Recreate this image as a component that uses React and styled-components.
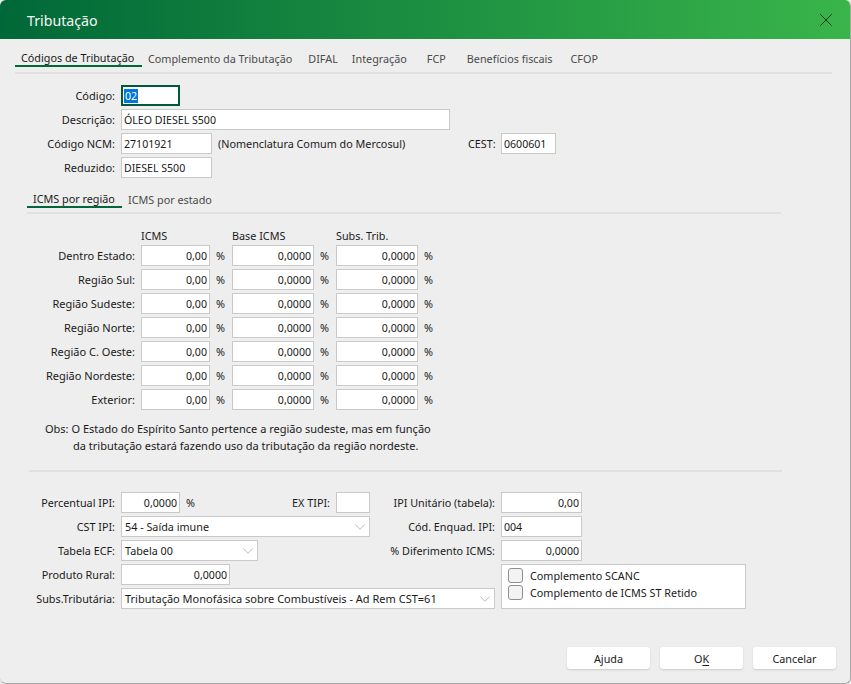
import React from "react";
import styled, { createGlobalStyle } from "styled-components";
import { ChevronDown, X } from "lucide-react";

const GlobalStyle = createGlobalStyle`
  html, body {
    margin: 0;
    padding: 0;
    background: #eeeeee;
  }
  * {
    box-sizing: border-box;
  }
`;

const Window = styled.div`
  width: 851px;
  height: 684px;
  display: flex;
  flex-direction: column;
  background: #eeeeee;
  border-right: 1px solid #a8a8a8;
  border-bottom: 1px solid #a8a8a8;
  border-radius: 6px;
  overflow: hidden;
  font-family: "Noto Sans", sans-serif;
  font-size: 10.8px;
  color: #1a1a1a;
`;

const TitleBar = styled.header`
  height: 39px;
  flex: none;
  display: flex;
  align-items: center;
  justify-content: space-between;
  padding: 1px 13px 0 27px;
  background: linear-gradient(90deg, #006838 0%, #39b54a 100%);
  color: #f4f8f4;
  font-size: 14.2px;
`;

const Tabs = styled.nav`
  display: flex;
  align-items: flex-end;
  height: ${(p) => p.$height}px;
  margin: ${(p) => p.$margin};
  border-bottom: 2px solid #e0e0e0;
  padding-bottom: ${(p) => p.$pb}px;
`;

const Tab = styled.div`
  height: ${(p) => (p.$active ? 19 : 18)}px;
  margin-left: ${(p) => p.$ml || 0}px;
  padding: 2px 6px 0;
  width: ${(p) => p.$w}px;
  white-space: nowrap;
  color: ${(p) => (p.$active ? "#1a1a1a" : "#4a4a4a")};
  border-bottom: 2px solid ${(p) => (p.$active ? "#006838" : "transparent")};
  margin-bottom: -1px;
`;

const TopForm = styled.section`
  display: flex;
  flex-direction: column;
  gap: 3px;
  margin: 11px 0 0 15px;
`;

const Row = styled.div`
  display: flex;
  align-items: center;
  height: 21px;
`;

const Label = styled.label`
  flex: none;
  width: 100px;
  margin-right: 6px;
  text-align: right;
  white-space: nowrap;
  font-size: 11px;
`;

const Field = styled.div`
  flex: none;
  width: ${(p) => (p.$w ? `${p.$w}px` : "100%")};
  height: 21px;
  display: flex;
  align-items: center;
  justify-content: ${(p) => (p.$right ? "flex-end" : "flex-start")};
  padding: 0 2px;
  background: #ffffff;
  border: 1px solid #c9c9c9;
  font-size: 10.6px;
  white-space: nowrap;
  overflow: hidden;
`;

const FocusField = styled(Field)`
  border: 2px solid #00593a;
  padding-left: 1px;
`;

const Selected = styled.span`
  background: #0078d7;
  color: #ffffff;
  padding: 0 1px;
`;

const Note = styled.span`
  width: 250px;
  margin-left: 6px;
  white-space: nowrap;
`;

const CestLabel = styled.label`
  width: 27px;
  margin-right: 6px;
  white-space: nowrap;
`;

const RatesGrid = styled.section`
  display: grid;
  grid-template-columns: 121px 69px 22px 82px 22px 82px 22px;
  grid-auto-rows: 21px;
  row-gap: 3px;
  align-items: center;
  margin: 7px 0 0 20px;
`;

const RateHead = styled.div`
  height: 14px;
  align-self: end;
  grid-column: ${(p) => p.$col};
  white-space: nowrap;
`;

const RateLabel = styled.label`
  padding-right: 6px;
  text-align: right;
  white-space: nowrap;
  font-size: 11px;
`;

const Percent = styled.span`
  padding-left: 6px;
`;

const Obs = styled.p`
  margin: 10px 0 0 45px;
  line-height: 17px;
  font-size: 11px;
  white-space: nowrap;
`;

const ObsIndent = styled.span`
  display: block;
  padding-left: 28px;
`;

const Rule = styled.hr`
  height: 2px;
  width: 753px;
  margin: 16px 0 0 29px;
  border: 0;
  background: #e0e0e0;
`;

const BottomGrid = styled.section`
  display: grid;
  grid-template-columns: 100px 249px 119px 81px 158px;
  grid-auto-rows: 21px;
  gap: 3px 6px;
  align-items: center;
  margin: 20px 0 0 15px;
`;

const CellLabel = styled.label`
  text-align: right;
  white-space: nowrap;
`;

const Inline = styled.div`
  display: flex;
  align-items: center;
  height: 21px;
`;

const ExLabel = styled.label`
  margin-left: auto;
  margin-right: 6px;
`;

const Select = styled(Field)`
  justify-content: space-between;
  padding: 0 0 0 3px;
  font-size: ${(p) => (p.$wide ? 11 : 10.8)}px;
  width: ${(p) => (p.$w ? `${p.$w}px` : "100%")};
  grid-column: ${(p) => p.$span || "auto"};
  svg {
    color: #999999;
    flex: none;
  }
`;

const CheckBox = styled.div`
  grid-column: 4 / 6;
  grid-row: 4 / 6;
  height: 45px;
  align-self: start;
  width: 245px;
  padding: 2px 6px;
  background: #ffffff;
  border: 1px solid #c9c9c9;
`;

const CheckRow = styled.div`
  display: flex;
  align-items: center;
  gap: 7px;
  height: 17px;
`;

const Check = styled.span`
  width: 15px;
  height: 15px;
  background: #f3f3f3;
  border: 1px solid #8e8e8e;
  border-radius: 3px;
`;

const Footer = styled.footer`
  display: flex;
  justify-content: flex-end;
  gap: 10px;
  margin-top: auto;
  padding: 0 14px 14px 0;
`;

const Button = styled.button`
  width: 83px;
  height: 22px;
  padding: 0;
  background: #ffffff;
  border: 0;
  border-radius: 3px;
  box-shadow: 0 1px 2px rgba(0, 0, 0, 0.15);
  font: inherit;
  color: #1a1a1a;
  u {
    text-underline-offset: 2px;
  }
`;

const regioes = [
  "Dentro Estado:",
  "Região Sul:",
  "Região Sudeste:",
  "Região Norte:",
  "Região C. Oeste:",
  "Região Nordeste:",
  "Exterior:",
];

const Chevron = () => <ChevronDown size={18} strokeWidth={0.9} />;

const App = () => {
  return (
    <Window>
      <GlobalStyle />
      <TitleBar>
        <span>Tributação</span>
        <X size={22} strokeWidth={1} color="#14301c" />
      </TitleBar>

      <Tabs $height={35} $pb={6} $margin="0 18px 0 15px">
        <Tab $active $w={127}>Códigos de Tributação</Tab>
        <Tab>Complemento da Tributação</Tab>
        <Tab $ml={4}>DIFAL</Tab>
        <Tab $ml={2}>Integração</Tab>
        <Tab $ml={8}>FCP</Tab>
        <Tab $ml={9}>Benefícios fiscais</Tab>
        <Tab $ml={6}>CFOP</Tab>
      </Tabs>

      <TopForm>
        <Row>
          <Label>Código:</Label>
          <FocusField $w={59}><Selected>02</Selected></FocusField>
        </Row>
        <Row>
          <Label>Descrição:</Label>
          <Field $w={329}>ÓLEO DIESEL S500</Field>
        </Row>
        <Row>
          <Label>Código NCM:</Label>
          <Field $w={91}>27101921</Field>
          <Note>(Nomenclatura Comum do Mercosul)</Note>
          <CestLabel>CEST:</CestLabel>
          <Field $w={55}>0600601</Field>
        </Row>
        <Row>
          <Label>Reduzido:</Label>
          <Field $w={91}>DIESEL S500</Field>
        </Row>
      </TopForm>

      <Tabs $height={36} $pb={5} $margin="0 69px 0 27px">
        <Tab $active $w={95}>ICMS por região</Tab>
        <Tab>ICMS por estado</Tab>
      </Tabs>

      <RatesGrid>
        <RateHead $col="2">ICMS</RateHead>
        <RateHead $col="4">Base ICMS</RateHead>
        <RateHead $col="6 / 8">Subs. Trib.</RateHead>
        {regioes.map((r) => (
          <React.Fragment key={r}>
            <RateLabel>{r}</RateLabel>
            <Field $right>0,00</Field>
            <Percent>%</Percent>
            <Field $right>0,0000</Field>
            <Percent>%</Percent>
            <Field $right>0,0000</Field>
            <Percent>%</Percent>
          </React.Fragment>
        ))}
      </RatesGrid>

      <Obs>
        Obs: O Estado do Espírito Santo pertence a região sudeste, mas em função
        <ObsIndent>da tributação estará fazendo uso da tributação da região nordeste.</ObsIndent>
      </Obs>

      <Rule />

      <BottomGrid>
        <CellLabel>Percentual IPI:</CellLabel>
        <Inline>
          <Field $w={59} $right>0,0000</Field>
          <Percent>%</Percent>
          <ExLabel>EX TIPI:</ExLabel>
          <Field $w={34} />
        </Inline>
        <CellLabel>IPI Unitário (tabela):</CellLabel>
        <Field $right>0,00</Field>
        <span />

        <CellLabel>CST IPI:</CellLabel>
        <Select>54 - Saída imune<Chevron /></Select>
        <CellLabel>Cód. Enquad. IPI:</CellLabel>
        <Field>004</Field>
        <span />

        <CellLabel>Tabela ECF:</CellLabel>
        <Select $w={137}>Tabela 00<Chevron /></Select>
        <CellLabel>% Diferimento ICMS:</CellLabel>
        <Field $right>0,0000</Field>
        <span />

        <CellLabel>Produto Rural:</CellLabel>
        <Field $w={109} $right>0,0000</Field>
        <span />
        <CheckBox>
          <CheckRow><Check />Complemento SCANC</CheckRow>
          <CheckRow><Check />Complemento de ICMS ST Retido</CheckRow>
        </CheckBox>

        <CellLabel>Subs.Tributária:</CellLabel>
        <Select $span="2 / 4" $wide>
          Tributação Monofásica sobre Combustíveis - Ad Rem CST=61
          <Chevron />
        </Select>
      </BottomGrid>

      <Footer>
        <Button>Ajuda</Button>
        <Button>O<u>K</u></Button>
        <Button>Cancelar</Button>
      </Footer>
    </Window>
  );
};

export default App;
